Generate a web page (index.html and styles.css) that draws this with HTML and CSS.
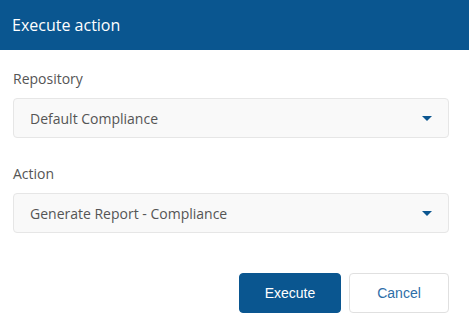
FILE: index.html
```html
<!DOCTYPE html>
<html lang="en">
<head>
    <meta charset="UTF-8">
    <meta name="viewport" content="width=device-width, initial-scale=1.0">
    <title>Execute action</title>
    <link rel="stylesheet" href="styles.css">
</head>
<body>
    <div class="modal">
        <div class="modal-header">Execute action</div>
        <div class="modal-body">
            <div class="field">
                <label class="field-label">Repository</label>
                <div class="dropdown">
                    <span class="dropdown-value">Default Compliance</span>
                    <svg class="caret" width="10" height="5" viewBox="0 0 10 5"><path d="M0 0h10L5 5z" fill="#0b5690"/></svg>
                </div>
            </div>
            <div class="field">
                <label class="field-label">Action</label>
                <div class="dropdown">
                    <span class="dropdown-value">Generate Report - Compliance</span>
                    <svg class="caret" width="10" height="5" viewBox="0 0 10 5"><path d="M0 0h10L5 5z" fill="#0b5690"/></svg>
                </div>
            </div>
        </div>
        <div class="modal-footer">
            <button class="btn btn-primary">Execute</button>
            <button class="btn btn-default">Cancel</button>
        </div>
    </div>
</body>
</html>
```

FILE: styles.css
```css
body {
    margin: 0;
    font-family: "Open Sans", Arial, sans-serif;
    background: #fff;
    color: #555;
}
.modal {
    width: 469px;
    height: 319px;
}
.modal-header {
    height: 50px;
    box-sizing: border-box;
    padding: 0 12px;
    display: flex;
    align-items: center;
    background: #0a5690;
    color: #fff;
    font-size: 16px;
}
.modal-body {
    padding: 19px 20px 0 13px;
}
.field {
    margin-bottom: 26px;
}
.field:last-child {
    margin-bottom: 0;
}
.field-label {
    display: block;
    font-size: 14px;
    line-height: 20px;
    margin-bottom: 9px;
    color: #555;
}
.dropdown {
    height: 40px;
    box-sizing: border-box;
    display: flex;
    align-items: center;
    justify-content: space-between;
    padding: 0 16px;
    background: #f9f9f9;
    border: 1px solid #e6e6e6;
    border-radius: 4px;
    font-size: 14px;
    color: #555;
}
.caret {
    display: block;
}
.modal-footer {
    display: flex;
    justify-content: flex-end;
    gap: 8px;
    padding: 40px 20px 0 0;
}
.btn {
    height: 40px;
    box-sizing: border-box;
    border-radius: 4px;
    font-family: "Liberation Sans", Arial, sans-serif;
    font-size: 14px;
    cursor: pointer;
}
.btn-primary {
    width: 102px;
    background: #0a5690;
    border: 1px solid #0a5690;
    color: #fff;
}
.btn-default {
    width: 100px;
    background: #fff;
    border: 1px solid #e0e0e0;
    color: #2d6ea8;
}
```
